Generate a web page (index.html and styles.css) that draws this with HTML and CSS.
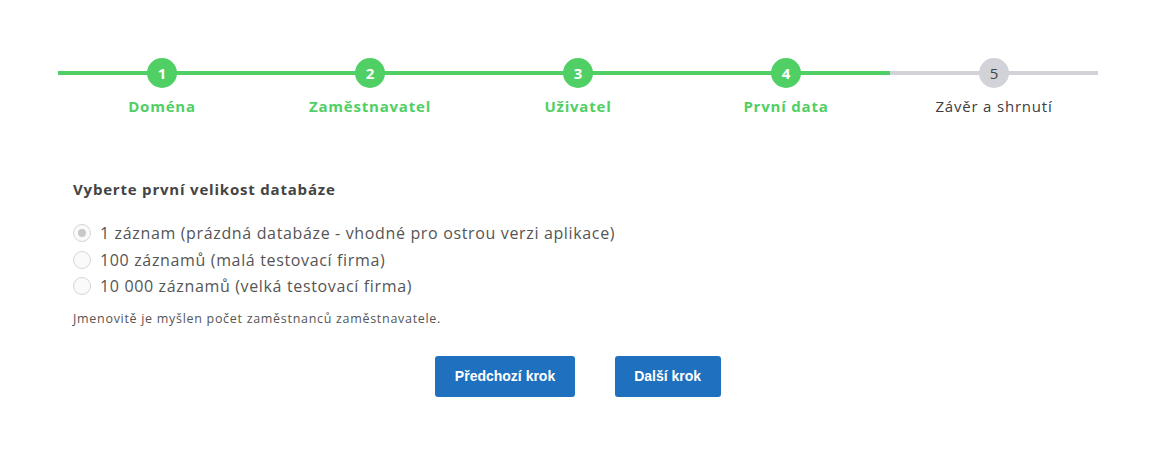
FILE: index.html
```html
<!DOCTYPE html>
<html lang="cs">
<head>
    <meta charset="UTF-8">
    <title>Průvodce nastavením</title>
    <link rel="stylesheet" href="styles.css">
</head>
<body>
    <div class="wizard">
        <div class="steps">
            <div class="step done">
                <div class="step-num">1</div>
                <div class="step-label">Doména</div>
            </div>
            <div class="step done">
                <div class="step-num">2</div>
                <div class="step-label">Zaměstnavatel</div>
            </div>
            <div class="step done">
                <div class="step-num">3</div>
                <div class="step-label">Uživatel</div>
            </div>
            <div class="step done">
                <div class="step-num">4</div>
                <div class="step-label">První data</div>
            </div>
            <div class="step">
                <div class="step-num">5</div>
                <div class="step-label">Závěr a shrnutí</div>
            </div>
        </div>

        <div class="content">
            <div class="title">Vyberte první velikost databáze</div>
            <div class="options">
                <label class="option"><span class="radio checked"></span>1 záznam (prázdná databáze - vhodné pro ostrou verzi aplikace)</label>
                <label class="option"><span class="radio"></span>100 záznamů (malá testovací firma)</label>
                <label class="option"><span class="radio"></span>10 000 záznamů (velká testovací firma)</label>
            </div>
            <p class="note">Jmenovitě je myšlen počet zaměstnanců zaměstnavatele.</p>
        </div>

        <div class="buttons">
            <button class="btn">Předchozí krok</button>
            <button class="btn">Další krok</button>
        </div>
    </div>
</body>
</html>
```

FILE: styles.css
```css
body {
    margin: 0;
    padding: 0;
    background: #fff;
    font-family: "Open Sans", sans-serif;
    color: #444;
}
.wizard {
    width: 1040px;
    margin-left: 58px;
    padding-top: 58px;
}
.steps {
    display: flex;
}
.step {
    flex: 1;
    display: flex;
    flex-direction: column;
    align-items: center;
    position: relative;
}
.step::before {
    content: "";
    position: absolute;
    left: 0;
    right: 0;
    top: 13px;
    height: 4px;
    background: #d2d2d9;
}
.step.done::before {
    background: #50cf64;
}
.step-num {
    position: relative;
    width: 30px;
    height: 30px;
    border-radius: 50%;
    background: #d2d2d9;
    color: #444;
    font-size: 15px;
    line-height: 30px;
    text-align: center;
}
.step.done .step-num {
    background: #50cf64;
    color: #fff;
    font-weight: 700;
}
.step-label {
    margin-top: 7px;
    font-size: 15px;
    line-height: 22px;
    letter-spacing: 0.8px;
    color: #3d3d3d;
}
.step.done .step-label {
    color: #50cf64;
    font-weight: 700;
}
.content {
    padding: 0 15px;
    margin-top: 62px;
}
.title {
    font-size: 15px;
    font-weight: 700;
    line-height: 20px;
    letter-spacing: 0.8px;
    color: #444;
}
.options {
    margin-top: 21px;
    display: flex;
    flex-direction: column;
}
.option {
    display: flex;
    align-items: center;
    height: 26.5px;
    font-size: 16px;
    letter-spacing: 0.65px;
    color: #555;
}
.radio {
    width: 16px;
    height: 16px;
    border: 1px solid #d6d6d6;
    border-radius: 50%;
    background: #fafafa;
    margin: 0 9px 0 0;
    position: relative;
    box-sizing: content-box;
}
.radio.checked::after {
    content: "";
    position: absolute;
    left: 4px;
    top: 4px;
    width: 8px;
    height: 8px;
    border-radius: 50%;
    background: #c8c8c8;
}
.note {
    margin: 10px 0 0;
    font-size: 12.5px;
    line-height: 18px;
    letter-spacing: 0.7px;
    color: #555;
}
.buttons {
    display: flex;
    justify-content: center;
    gap: 40px;
    margin-top: 28px;
}
.btn {
    height: 41px;
    padding: 0 19.5px;
    border: none;
    border-radius: 3px;
    background: #1f70be;
    color: #fff;
    font-family: "Liberation Sans", Arial, sans-serif;
    font-weight: 700;
    font-size: 14px;
}
```
